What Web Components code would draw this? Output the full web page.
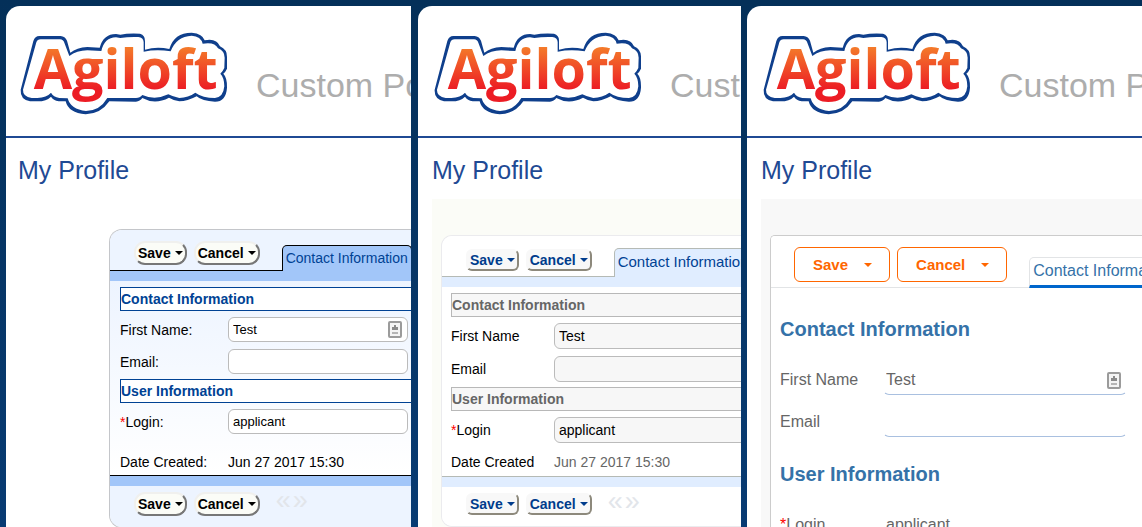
<!DOCTYPE html>
<html lang="en">
<head>
<meta charset="utf-8">
<title>My Profile</title>
<style>
  html, body { height: 100%; }
  body {
    margin: 0;
    overflow: hidden;
    font-family: "Liberation Sans", Arial, sans-serif;
    background: linear-gradient(#043059, #083b73);
  }
  main {
    display: grid;
    grid-template-columns: minmax(0, 411fr) minmax(0, 330fr) minmax(0, 401fr);
    height: 100%;
  }

  .classic {
    --page-pad: 12px;
    --canvas-pad: 30px 0 0 91px;
    --card-radius: 13px;
    --card-border: #c4c6ca;
    --card-bg: linear-gradient(#edf4ff, #fff);
    --bar-bg: #edf4ff;
    --line: #000;
    --band: #a2c6f9;
    --tab-bg: #a2c6f9;
    --tab-color: #004294;
    --tab-height: 26px;
    --tab-size: 14px;
    --content-pad: 6px 0 0 10px;
    --section-color: #004294;
    --section-border: #004294;
    --section-bg: #fff;
    --label-width: 108px;
    --input-width: 180px;
    --input-size: 13px;
    --input-height: 25px;
    --input-border: #bbb;
    --static-row: 40px;
    --static-pad: 14px;
    --btn-color: #000;
    --btn-bg: #fbfcf7;
    --btn-border: #f0f0ee #777 #777 #f0f0ee;
    --btn-radius: 11px;
  }
  .soft {
    --gutter: 7px;
    --page-pad: 14px;
    --canvas-bg: #fbfcf7;
    --canvas-pad: 36px 0 0 9px;
    --card-radius: 11px;
    --card-border: #ebebee;
    --line: #b5bab5;
    --band: #e0edff;
    --tab-bg: #e0edff;
    --tab-color: #004294;
    --tab-height: 29px;
    --tab-size: 15px;
    --content-pad: 6px 0 0 9px;
    --section-color: #666;
    --section-border: #b8b8b8;
    --section-bg: #f7f7f7;
    --input-bg: #f7f7f7;
    --input-pad: 4px;
    --input-height: 26px;
    --input-border: #bbb;
    --static-color: #666;
    --static-row: 32px;
    --static-pad: 4px;
    --btn-color: #003c8c;
    --btn-bg: #f8f8f8;
    --btn-border: #f8f8f8 #8d897c #8d897c #f8f8f8;
    --btn-radius: 6px;
    --btn-height: 22px;
  }
  .modern {
    --page-pad: 14px;
    --canvas-bg: #f8f8f8;
    --canvas-pad: 36px 0 0 9px;
    --card-radius: 5px;
    --card-border: #ccc;
    --bar-height: 51px;
    --bar-pad: 23px;
    --bar-gap: 22px;
    --line: #e2e4e6;
    --band-height: 0px;
    --tab-bg: #fff;
    --tab-color: #3572a8;
    --tab-border: #e2e4e6;
    --tab-foot: 3px solid #06c;
    --tab-height: 31px;
    --tab-size: 16px;
    --content-pad: 4px 0 0 9px;
    --section-color: #3572a8;
    --section-border: transparent;
    --section-line: 0;
    --section-size: 20px;
    --section-margin: 25px 0 12px;
    --label-size: 16px;
    --label-color: #666;
    --input-width: 244px;
    --input-size: 16px;
    --input-color: #666;
    --input-height: 30px;
    --input-pad: 2px;
    --input-border: transparent transparent #a9c0e0;
    --row-pad: 12px 0 0;
    --btn-color: #f60;
    --btn-bg: #fff;
    --btn-border: #f60;
    --btn-line: 1px;
    --btn-radius: 6px;
    --btn-height: 35px;
    --btn-pad: 0 17px 0 18px;
    --btn-gap: 16px;
    --btn-size: 15px;
    --btn-space: 7px;
  }
</style>
</head>
<body>
<main>
  <portal-page class="classic">
    <profile-card>
      <form-section>Contact Information</form-section>
      <form-field label="First Name:" value="Test" icon></form-field>
      <form-field label="Email:"></form-field>
      <form-section class="next">User Information</form-section>
      <form-field label="Login:" value="applicant" required></form-field>
      <form-field label="Date Created:" value="Jun 27 2017 15:30" static></form-field>
    </profile-card>
  </portal-page>
  <portal-page class="soft">
    <profile-card>
      <form-section>Contact Information</form-section>
      <form-field label="First Name" value="Test"></form-field>
      <form-field label="Email"></form-field>
      <form-section class="next">User Information</form-section>
      <form-field label="Login" value="applicant" required></form-field>
      <form-field label="Date Created" value="Jun 27 2017 15:30" static></form-field>
    </profile-card>
  </portal-page>
  <portal-page class="modern">
    <profile-card nofooter>
      <form-section>Contact Information</form-section>
      <form-field label="First Name" value="Test" icon></form-field>
      <form-field label="Email"></form-field>
      <form-section>User Information</form-section>
      <form-field label="Login" value="applicant" required></form-field>
    </profile-card>
  </portal-page>
</main>

<script>
class AgiloftLogo extends HTMLElement {
  constructor() {
    super();
    this.attachShadow({ mode: 'open' });
    this.shadowRoot.innerHTML = `
      <style>
        :host { display: block; flex: none; width: 208px; }
        svg { display: block; width: 100%; }
        text { font: 700 167px "Open Sans", "Noto Sans", sans-serif; }
      </style>
      <svg viewBox="60 95 624 250" role="img" aria-label="Agiloft">
        <defs>
          <linearGradient id="fire" gradientUnits="userSpaceOnUse" x1="0" y1="140" x2="0" y2="290">
            <stop offset="0" stop-color="#f47b2a"/>
            <stop offset=".85" stop-color="#ec1c24"/>
          </linearGradient>
        </defs>
        <path fill="#0f3f8c" d="M100 122Q105 107 118 107L182 107Q195 108 201 121L211 157Q230 142 262 140L299 142Q310 101 348 101L361 103Q385 98 420 100Q436 105 435 122L435 148Q470 137 508 146Q522 97 575 97Q608 100 614 120Q650 113 660 138Q682 148 681 170L681 205Q677 214 670 220Q682 232 681 262Q678 304 645 304Q606 303 590 288Q562 303 538 303Q520 300 507 292Q465 314 427 293Q420 303 408 304L328 303Q302 341 257 342Q205 338 197 303L176 303Q160 300 153 289Q140 303 112 303L90 303Q60 297 62 268Z"/>
        <path fill="#fff" d="M109 126Q112 117 122 117L180 117Q190 118 193 127L208 167Q230 151 262 150L304 152Q313 112 348 111L361 113Q385 109 415 110Q430 112 431 125L431 154Q470 146 512 153Q529 108 575 106Q603 108 608 130Q645 124 654 144Q674 152 674 172L673 203Q669 212 661 220Q673 232 673 258Q670 291 645 293Q608 293 586 277Q565 292 538 293Q520 290 505 282Q465 301 427 284Q420 293 408 293L322 293Q300 331 258 332Q212 328 203 294L178 293Q160 290 153 277Q140 292 112 293L95 293Q68 289 69 268Z"/>
        <text x="101" y="266" fill="url(#fire)">Agiloft</text>
      </svg>`;
  }
}
customElements.define('agiloft-logo', AgiloftLogo);

class PortalPage extends HTMLElement {
  constructor() {
    super();
    this.attachShadow({ mode: 'open' });
    this.shadowRoot.innerHTML = `
      <style>
        :host {
          display: flex;
          box-sizing: border-box;
          min-width: 0;
          padding: 6px 0 0 var(--gutter, 6px);
          overflow: hidden;
        }
        .clip {
          flex: 1;
          min-width: 0;
          overflow: hidden;
          background: #fff;
          border-top-left-radius: 14px;
        }
        .page { min-width: 640px; }
        header {
          display: flex;
          gap: 28px;
          padding: 26px 0 21px calc(var(--page-pad) + 2px);
          border-bottom: 2px solid #1f4a94;
        }
        .name {
          padding-top: 34px;
          font-size: 34px;
          line-height: 38px;
          color: #adadad;
          white-space: nowrap;
        }
        h1 {
          margin: 0 0 0 var(--page-pad);
          padding: 17px 0 14px;
          font-size: 25px;
          line-height: 30px;
          font-weight: normal;
          color: #1f4a94;
        }
        .canvas {
          margin-left: var(--page-pad);
          padding: var(--canvas-pad);
          background: var(--canvas-bg, #fff);
        }
      </style>
      <div class="clip">
        <div class="page">
          <header>
            <agiloft-logo></agiloft-logo>
            <div class="name">Custom Portal</div>
          </header>
          <h1>My Profile</h1>
          <div class="canvas"><slot></slot></div>
        </div>
      </div>`;
  }
}
customElements.define('portal-page', PortalPage);

class MenuButton extends HTMLElement {
  constructor() {
    super();
    this.attachShadow({ mode: 'open' });
    this.shadowRoot.innerHTML = `
      <style>
        :host { display: block; }
        button {
          display: flex;
          align-items: center;
          gap: var(--btn-gap, 4px);
          box-sizing: border-box;
          height: var(--btn-height, 24px);
          margin: 0;
          padding: var(--btn-pad, 0 2px);
          border: var(--btn-line, 2px) solid;
          border-color: var(--btn-border);
          border-radius: var(--btn-radius);
          background: var(--btn-bg);
          color: var(--btn-color);
          font: bold var(--btn-size, 14px) "Liberation Sans", Arial, sans-serif;
        }
        i {
          border: 4px solid transparent;
          border-top-color: currentColor;
          border-bottom: 0;
        }
      </style>
      <button type="button"><slot></slot><i></i></button>`;
  }
}
customElements.define('menu-button', MenuButton);

class ProfileCard extends HTMLElement {
  constructor() {
    super();
    this.attachShadow({ mode: 'open' });
    const buttons = `
      <div class="buttons">
        <menu-button>Save</menu-button>
        <menu-button>Cancel</menu-button>
      </div>`;
    const footer = `
      <div class="band foot"></div>
      <footer>
        ${buttons}
        <div class="pager">
          <button type="button" aria-label="Previous">«</button>
          <button type="button" aria-label="Next">»</button>
        </div>
      </footer>`;
    this.shadowRoot.innerHTML = `
      <style>
        :host {
          display: block;
          overflow: hidden;
          border: 1px solid var(--card-border);
          border-right: 0;
          border-radius: var(--card-radius) 0 0 var(--card-radius);
          background: #fff;
        }
        .bar {
          display: flex;
          align-items: flex-end;
          gap: var(--bar-gap, 22px);
          height: var(--bar-height, 40px);
          padding-left: var(--bar-pad, 24px);
          border-bottom: 1px solid var(--line);
          background: var(--bar-bg, #fff);
        }
        .buttons {
          display: flex;
          gap: var(--btn-space, 7px);
          padding-bottom: 5px;
        }
        .tab {
          box-sizing: border-box;
          height: var(--tab-height);
          margin: 0 0 -1px;
          padding: 0 3px 2px;
          border: 1px solid var(--tab-border, var(--line));
          border-bottom: var(--tab-foot, 0);
          border-radius: 5px 5px 0 0;
          background: var(--tab-bg);
          color: var(--tab-color);
          font: var(--tab-size)/22px "Liberation Sans", Arial, sans-serif;
          white-space: nowrap;
        }
        .band { height: var(--band-height, 10px); background: var(--band); }
        .foot { border-top: 1px solid var(--line); }
        .content { padding: var(--content-pad); background: var(--card-bg, #fff); }
        footer {
          display: flex;
          gap: 16px;
          padding: 6px 0 6px var(--bar-pad, 24px);
          background: var(--bar-bg, #fff);
        }
        .pager { display: flex; align-self: flex-start; gap: 2px; }
        .pager button {
          margin: 0;
          padding: 0;
          border: 0;
          background: none;
          color: #e2e5ea;
          font: 27px/16px "Liberation Sans", Arial, sans-serif;
        }
      </style>
      <div class="bar">
        ${buttons}
        <button type="button" class="tab">Contact Information</button>
      </div>
      <div class="band"></div>
      <div class="content"><slot></slot></div>
      ${this.hasAttribute('nofooter') ? '' : footer}`;
  }
}
customElements.define('profile-card', ProfileCard);

class FormSection extends HTMLElement {
  constructor() {
    super();
    this.attachShadow({ mode: 'open' });
    this.shadowRoot.innerHTML = `
      <style>
        :host {
          display: block;
          box-sizing: border-box;
          height: 24px;
          margin: var(--section-margin, 0);
          border: 1px solid var(--section-border);
          border-width: 1px 0 1px var(--section-line, 1px);
          background: var(--section-bg, transparent);
        }
        :host(.next) { margin-top: 4px; }
        h2 {
          margin: 0;
          font-size: var(--section-size, 14px);
          line-height: 22px;
          color: var(--section-color);
        }
      </style>
      <h2><slot></slot></h2>`;
  }
}
customElements.define('form-section', FormSection);

class FormField extends HTMLElement {
  constructor() {
    super();
    this.attachShadow({ mode: 'open' });
    const value = this.getAttribute('value') || '';
    const star = this.hasAttribute('required') ? '<b>*</b>' : '';
    const icon = this.hasAttribute('icon') ? `
      <svg width="14" height="17" viewBox="0 0 14 17" aria-hidden="true">
        <rect x="1" y="1" width="12" height="15" rx="1" fill="#f4f4f4" stroke="#9b9b9b" stroke-width="2"/>
        <path d="M6 4h2v2h2v3H4V6h2z" fill="#8a8a8a"/>
        <path d="M4 11h6v2H4z" fill="#b5b5b5"/>
      </svg>` : '';
    const control = this.hasAttribute('static')
      ? `<output id="f">${value}</output>`
      : `<div class="box"><input id="f" type="text" value="${value}">${icon}</div>`;
    this.shadowRoot.innerHTML = `
      <style>
        :host {
          display: flex;
          align-items: center;
          padding: var(--row-pad, 6px 0 1px);
          font-size: var(--label-size, 14px);
        }
        :host([static]) {
          box-sizing: border-box;
          height: var(--static-row);
          padding: var(--static-pad) 0 0;
        }
        label {
          flex: none;
          width: var(--label-width, 103px);
          color: var(--label-color, #000);
        }
        b { font-weight: normal; color: #f00; }
        .box {
          display: flex;
          align-items: center;
          box-sizing: border-box;
          width: var(--input-width, 240px);
          height: var(--input-height);
          padding: 0 5px 0 var(--input-pad, 4px);
          border: 1px solid;
          border-color: var(--input-border);
          border-radius: 6px;
          background: var(--input-bg, #fff);
        }
        input {
          flex: 1;
          min-width: 0;
          padding: 0;
          border: 0;
          outline: 0;
          background: none;
          color: var(--input-color, #000);
          font: var(--input-size, 14px) "Liberation Sans", Arial, sans-serif;
        }
        output { color: var(--static-color, #000); }
      </style>
      <label for="f">${star}${this.getAttribute('label')}</label>
      ${control}`;
  }
}
customElements.define('form-field', FormField);
</script>
</body>
</html>
